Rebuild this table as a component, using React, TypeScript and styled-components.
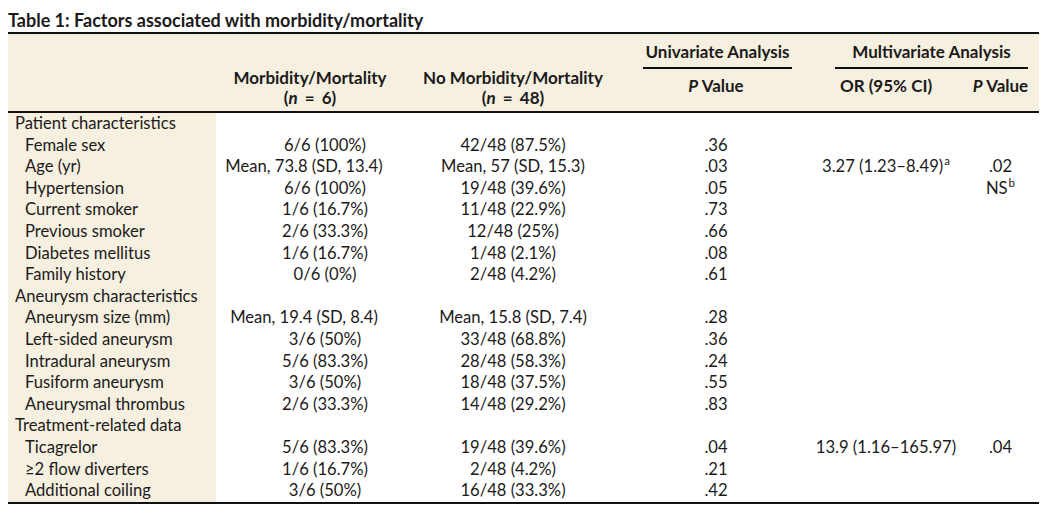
import React from "react";
import styled, { createGlobalStyle } from "styled-components";

const GlobalStyle = createGlobalStyle`
  html, body { margin: 0; padding: 0; background: #ffffff; }
  body { font-family: Lato, "Noto Sans", "Liberation Sans", sans-serif; color: #1c1a1a; }
`;

const COLS = "208px 188px 218px 188px 152px 77px";
const BEIGE = "#f5f0e0";

const Page = styled.div`
  padding: 8px 4px 0 8px;
  width: 1031px;
`;

const Title = styled.h1`
  margin: 0;
  font-size: 18px;
  font-weight: 700;
  line-height: 24px;
`;

const TableWrap = styled.div`
  border-top: 2px solid #111;
  border-bottom: 2px solid #111;
`;

const Head = styled.div`
  display: grid;
  grid-template-columns: ${COLS};
  grid-template-rows: 38px 39px;
  background: ${BEIGE};
  border-bottom: 2px solid #111;
  font-weight: 700;
  font-size: 17px;
`;

const StackHead = styled.div<{ $col: number }>`
  grid-column: ${(p) => p.$col};
  grid-row: 1 / 3;
  align-self: end;
  text-align: center;
  line-height: 20px;
  padding-bottom: 3px;
  white-space: nowrap;
`;

const CountLine = styled.span`
  word-spacing: 3px;
`;

const GroupHead = styled.div<{ $cols: string; $ml: number; $mr: number }>`
  grid-column: ${(p) => p.$cols};
  grid-row: 1;
  align-self: end;
  margin: 0 ${(p) => p.$mr}px 3px ${(p) => p.$ml}px;
  padding-bottom: 6px;
  border-bottom: 2px solid #111;
  text-align: center;
  line-height: 18px;
  white-space: nowrap;
`;

const SubHead = styled.div<{ $col: number }>`
  grid-column: ${(p) => p.$col};
  grid-row: 2;
  align-self: start;
  padding-top: 4px;
  text-align: center;
  line-height: 20px;
  white-space: nowrap;
`;

const Body = styled.div`
  font-size: 16.6px;
`;

const Row = styled.div`
  display: grid;
  grid-template-columns: ${COLS};
  height: 21.6px;
  line-height: 21.6px;
`;

const Label = styled.div<{ $indent: boolean }>`
  background: ${BEIGE};
  padding-left: ${(p) => (p.$indent ? 17 : 7)}px;
  white-space: nowrap;
`;

const Cell = styled.div<{ $pl?: number; $shift?: number }>`
  text-align: center;
  white-space: nowrap;
  padding-left: ${(p) => p.$pl ?? 0}px;
  & > span {
    position: relative;
    left: ${(p) => p.$shift ?? 0}px;
  }
`;

const Sup = styled.sup`
  font-size: 11.5px;
  line-height: 0;
  vertical-align: 0;
  position: relative;
  top: -7px;
  margin-left: 1px;
`;

const It = styled.i`
  font-style: italic;
`;

type DataRow = {
  label: string;
  indent: boolean;
  a?: string;
  aShift?: number;
  b?: string;
  p?: string;
  or?: React.ReactNode;
  mp?: React.ReactNode;
};

const rows: DataRow[] = [
  { label: "Patient characteristics", indent: false },
  { label: "Female sex", indent: true, a: "6/6 (100%)", b: "42/48 (87.5%)", p: ".36" },
  {
    label: "Age (yr)",
    indent: true,
    a: "Mean, 73.8 (SD, 13.4)",
    aShift: -21,
    b: "Mean, 57 (SD, 15.3)",
    p: ".03",
    or: (
      <>
        3.27 (1.23–8.49)<Sup>a</Sup>
      </>
    ),
    mp: ".02",
  },
  {
    label: "Hypertension",
    indent: true,
    a: "6/6 (100%)",
    b: "19/48 (39.6%)",
    p: ".05",
    mp: (
      <>
        NS<Sup>b</Sup>
      </>
    ),
  },
  { label: "Current smoker", indent: true, a: "1/6 (16.7%)", b: "11/48 (22.9%)", p: ".73" },
  { label: "Previous smoker", indent: true, a: "2/6 (33.3%)", b: "12/48 (25%)", p: ".66" },
  { label: "Diabetes mellitus", indent: true, a: "1/6 (16.7%)", b: "1/48 (2.1%)", p: ".08" },
  { label: "Family history", indent: true, a: "0/6 (0%)", b: "2/48 (4.2%)", p: ".61" },
  { label: "Aneurysm characteristics", indent: false },
  {
    label: "Aneurysm size (mm)",
    indent: true,
    a: "Mean, 19.4 (SD, 8.4)",
    aShift: -21,
    b: "Mean, 15.8 (SD, 7.4)",
    p: ".28",
  },
  { label: "Left-sided aneurysm", indent: true, a: "3/6 (50%)", b: "33/48 (68.8%)", p: ".36" },
  { label: "Intradural aneurysm", indent: true, a: "5/6 (83.3%)", b: "28/48 (58.3%)", p: ".24" },
  { label: "Fusiform aneurysm", indent: true, a: "3/6 (50%)", b: "18/48 (37.5%)", p: ".55" },
  { label: "Aneurysmal thrombus", indent: true, a: "2/6 (33.3%)", b: "14/48 (29.2%)", p: ".83" },
  { label: "Treatment-related data", indent: false },
  {
    label: "Ticagrelor",
    indent: true,
    a: "5/6 (83.3%)",
    b: "19/48 (39.6%)",
    p: ".04",
    or: "13.9 (1.16–165.97)",
    mp: ".04",
  },
  { label: "≥2 flow diverters", indent: true, a: "1/6 (16.7%)", b: "2/48 (4.2%)", p: ".21" },
  { label: "Additional coiling", indent: true, a: "3/6 (50%)", b: "16/48 (33.3%)", p: ".42" },
];

export default function App() {
  return (
    <>
      <GlobalStyle />
      <Page>
        <Title>Table 1: Factors associated with morbidity/mortality</Title>
        <TableWrap>
          <Head>
            <StackHead $col={2}>
              Morbidity/Mortality
              <br />
              <CountLine>
                (<It>n</It> = 6)
              </CountLine>
            </StackHead>
            <StackHead $col={3}>
              No Morbidity/Mortality
              <br />
              <CountLine>
                (<It>n</It> = 48)
              </CountLine>
            </StackHead>
            <GroupHead $cols="4" $ml={21} $mr={18}>
              Univariate Analysis
            </GroupHead>
            <GroupHead $cols="5 / 7" $ml={25} $mr={11}>
              Multivariate Analysis
            </GroupHead>
            <SubHead $col={4}>
              <It>P</It> Value
            </SubHead>
            <SubHead $col={5}>OR (95% CI)</SubHead>
            <SubHead $col={6}>
              <It>P</It> Value
            </SubHead>
          </Head>
          <Body>
            {rows.map((r) => (
              <Row key={r.label}>
                <Label $indent={r.indent}>{r.label}</Label>
                <Cell $pl={30} $shift={r.aShift}>
                  <span>{r.a}</span>
                </Cell>
                <Cell>
                  <span>{r.b}</span>
                </Cell>
                <Cell>
                  <span>{r.p}</span>
                </Cell>
                <Cell>
                  <span>{r.or}</span>
                </Cell>
                <Cell>
                  <span>{r.mp}</span>
                </Cell>
              </Row>
            ))}
          </Body>
        </TableWrap>
      </Page>
    </>
  );
}
